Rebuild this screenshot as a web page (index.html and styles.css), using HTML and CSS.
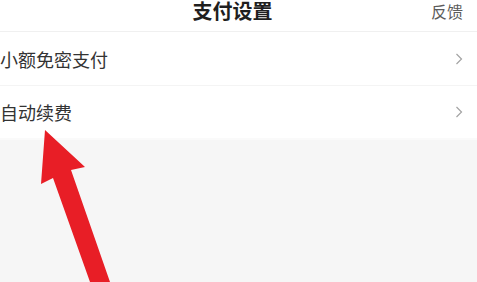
FILE: index.html
```html
<!DOCTYPE html>
<html lang="zh-CN">
<head>
<meta charset="utf-8">
<title>支付设置</title>
<link rel="stylesheet" href="styles.css">
</head>
<body>
<div class="page">
  <header class="topbar">
    <span class="spacer"></span>
    <h1 class="title">支付设置</h1>
    <span class="feedback">反馈</span>
  </header>
  <ul class="list">
    <li class="row">
      <span class="label">小额免密支付</span>
      <svg class="chev" width="8" height="12" viewBox="0 0 8 12"><polyline points="1.5,1 6.5,6 1.5,11" fill="none" stroke="#a3a3a3" stroke-width="1.2"/></svg>
    </li>
    <li class="row">
      <span class="label">自动续费</span>
      <svg class="chev" width="8" height="12" viewBox="0 0 8 12"><polyline points="1.5,1 6.5,6 1.5,11" fill="none" stroke="#a3a3a3" stroke-width="1.2"/></svg>
    </li>
  </ul>
  <div class="rest"></div>
  <svg class="arrow" width="477" height="282" viewBox="0 0 477 282">
    <polygon points="45,130 85,167 71,170 110,282 90,282 53,178 41,184" fill="#e81e26"/>
  </svg>
</div>
</body>
</html>
```

FILE: styles.css
```css
html, body {
  margin: 0;
  padding: 0;
  background: #f6f6f6;
}
.page {
  position: relative;
  width: 477px;
  height: 282px;
  overflow: hidden;
  display: flex;
  flex-direction: column;
  font-family: "Noto Sans CJK SC", "Noto Sans", sans-serif;
  background: #f6f6f6;
}
.topbar {
  display: grid;
  grid-template-columns: 1fr auto 1fr;
  align-items: start;
  height: 32px;
  padding-right: 12px;
  background: #fff;
  border-bottom: 1px solid #f0f0f0;
  box-sizing: border-box;
}
.title {
  margin: 0;
  font-size: 20px;
  line-height: 21px;
  font-weight: 700;
  color: #1f1f1f;
}
.feedback {
  justify-self: end;
  padding-right: 2px;
  font-size: 16px;
  line-height: 22px;
  color: #5c5c5c;
}
.list {
  list-style: none;
  margin: 0;
  padding: 0;
  background: #fff;
}
.row {
  display: flex;
  align-items: center;
  justify-content: space-between;
  height: 53px;
  padding-right: 14px;
  box-sizing: border-box;
}
.row + .row {
  border-top: 1px solid #f4f4f4;
}
.label {
  font-size: 18px;
  color: #333;
}
.chev {
  display: block;
}
.rest {
  flex: 1;
  background: #f6f6f6;
  border-top: 2px solid #fafafa;
}
.arrow {
  position: absolute;
  left: 0;
  top: 0;
}
```
